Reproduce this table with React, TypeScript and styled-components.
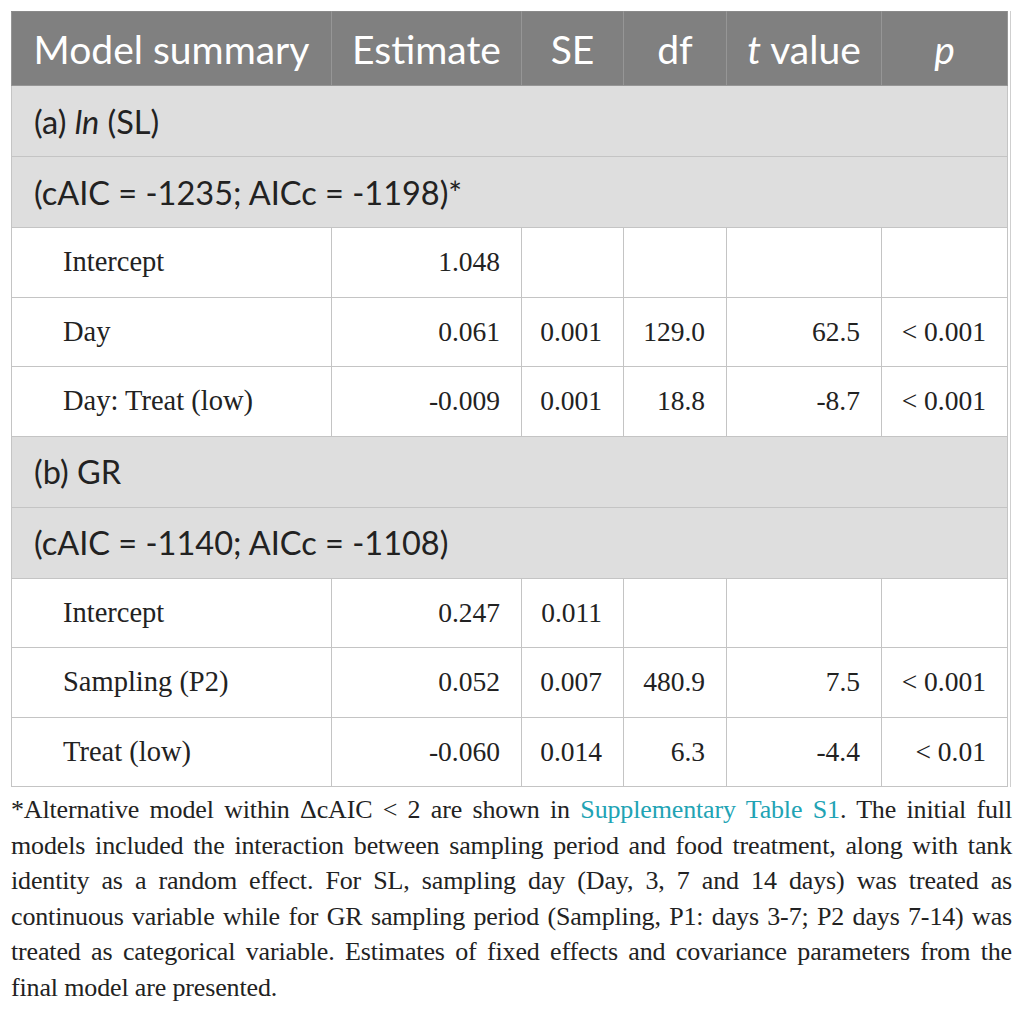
import { createGlobalStyle, styled } from 'styled-components'

const GlobalStyle = createGlobalStyle`
  html, body {
    margin: 0;
    padding: 0;
    background: #ffffff;
  }
`

type Row =
  | { kind: 'section'; label: React.ReactNode }
  | { kind: 'data'; label: string; values: string[] }

const rows: Row[] = [
  { kind: 'section', label: <>(a) <i>ln</i> (SL)</> },
  { kind: 'section', label: '(cAIC = -1235; AICc = -1198)*' },
  { kind: 'data', label: 'Intercept', values: ['1.048', '', '', '', ''] },
  { kind: 'data', label: 'Day', values: ['0.061', '0.001', '129.0', '62.5', '< 0.001'] },
  { kind: 'data', label: 'Day: Treat (low)', values: ['-0.009', '0.001', '18.8', '-8.7', '< 0.001'] },
  { kind: 'section', label: '(b) GR' },
  { kind: 'section', label: '(cAIC = -1140; AICc = -1108)' },
  { kind: 'data', label: 'Intercept', values: ['0.247', '0.011', '', '', ''] },
  { kind: 'data', label: 'Sampling (P2)', values: ['0.052', '0.007', '480.9', '7.5', '< 0.001'] },
  { kind: 'data', label: 'Treat (low)', values: ['-0.060', '0.014', '6.3', '-4.4', '< 0.01'] },
]

const columnWidths = [320, 190, 102, 103, 155, 126]

export default function App() {
  // footnote lines are broken where the printed table breaks them
  const footLines: React.ReactNode[] = [
    <>
      *Alternative model within ΔcAIC &lt; 2 are shown in <FootLink>Supplementary Table S1</FootLink>. The initial
      full
    </>,
    'models included the interaction between sampling period and food treatment, along with tank',
    'identity as a random effect. For SL, sampling day (Day, 3, 7 and 14 days) was treated as',
    'continuous variable while for GR sampling period (Sampling, P1: days 3-7; P2 days 7-14) was',
    'treated as categorical variable. Estimates of fixed effects and covariance parameters from the',
    'final model are presented.',
  ]

  return (
    <Page>
      <GlobalStyle />
      <TableFrame>
        <Table>
          <colgroup>
            {columnWidths.map((w, i) => (
              <col key={i} style={{ width: w }} />
            ))}
          </colgroup>
          <thead>
            <tr>
              <HeadCell>Model summary</HeadCell>
              <HeadCell>Estimate</HeadCell>
              <HeadCell>SE</HeadCell>
              <HeadCell>df</HeadCell>
              <HeadCell>
                <i>t</i> value
              </HeadCell>
              <HeadCell>
                <i>p</i>
              </HeadCell>
            </tr>
          </thead>
          <tbody>
            {rows.map((row, i) =>
              row.kind === 'section' ? (
                <tr key={i}>
                  <SectionCell colSpan={6}>{row.label}</SectionCell>
                </tr>
              ) : (
                <tr key={i}>
                  <LabelCell>{row.label}</LabelCell>
                  {row.values.map((v, j) => (
                    <ValueCell key={j}>{v}</ValueCell>
                  ))}
                </tr>
              )
            )}
          </tbody>
        </Table>
      </TableFrame>
      <Footnote>
        {footLines.map((line, i) => (
          <FootLine key={i} $last={i === footLines.length - 1}>
            {line}
          </FootLine>
        ))}
      </Footnote>
    </Page>
  )
}

const Page = styled.div`
  padding: 11px 14px 0 11px;
  width: 1001px;
`

const TableFrame = styled.div`
  width: 999px;
  border-right: 1px solid #cfcfcf;
`

const Table = styled.table`
  border-collapse: collapse;
  table-layout: fixed;
  width: 996px;

  td,
  th {
    border: 1px solid #c4c4c4;
  }
`

const HeadCell = styled.th`
  height: 73px;
  padding: 0 10px;
  background: #808080;
  color: #ffffff;
  font-family: Lato, 'Open Sans', sans-serif;
  font-size: 39px;
  font-weight: 400;
  text-align: center;
  vertical-align: middle;

  && {
    border-color: #969696;
    border-top-color: #8a8a8a;
  }
`

const SectionCell = styled.td`
  height: 70px;
  padding: 0 22px;
  background: #dedede;
  color: #222222;
  font-family: Lato, 'Open Sans', sans-serif;
  font-size: 32.5px;
  vertical-align: middle;
`

const BodyCell = styled.td`
  height: 68.5px;
  color: #222222;
  font-family: 'Liberation Serif', 'Times New Roman', serif;
  font-size: 27.5px;
  vertical-align: middle;
  white-space: nowrap;
`

const LabelCell = styled(BodyCell)`
  padding: 0 10px 0 51px;
  font-size: 28.5px;
  text-align: left;
`

const ValueCell = styled(BodyCell)`
  padding: 0 21px 0 8px;
  text-align: right;
`

const Footnote = styled.div`
  margin: 5px 0 0 0;
  width: 1001px;
  color: #222222;
  font-family: 'Liberation Serif', 'Times New Roman', serif;
  font-size: 26px;
  letter-spacing: -0.15px;
  line-height: 35.5px;
`

const FootLine = styled.div<{ $last?: boolean }>`
  white-space: nowrap;
  text-align: ${(p) => (p.$last ? 'left' : 'justify')};
  text-align-last: ${(p) => (p.$last ? 'left' : 'justify')};
`

const FootLink = styled.span`
  color: #21a3b4;
`
